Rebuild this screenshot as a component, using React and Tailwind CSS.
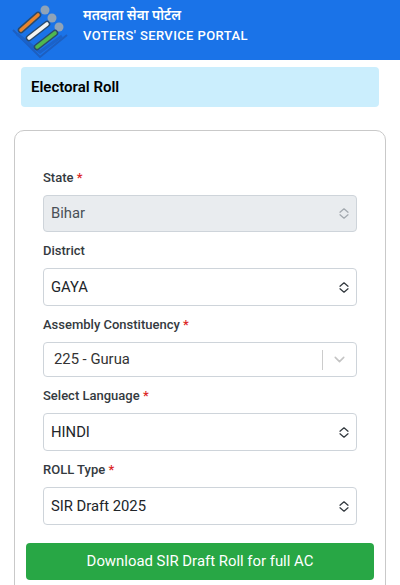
import { ChevronDown } from 'lucide-react'

function UpDown({ muted }) {
    return (
        <svg width="10" height="11" viewBox="0 0 10 11" fill="none" stroke={muted ? '#a3a9af' : '#343a40'} strokeWidth="1.3" strokeLinecap="round" strokeLinejoin="round">
            <path d="M1 4.2l4-3.4 4 3.4" />
            <path d="M1 6.8l4 3.4 4-3.4" />
        </svg>
    )
}

function Logo() {
    return (
        <svg width="83" height="60" viewBox="0 0 83 60" className="shrink-0">
            <path d="M13 30L40 57L67 35" fill="none" stroke="#1d5fc0" strokeWidth="2" />
            <path d="M17 34L40 52L62 36" fill="none" stroke="#1b62c9" strokeWidth="3" />
            <circle cx="45" cy="10" r="4.5" fill="#8fa3b8" />
            <circle cx="52" cy="18" r="4.5" fill="#8fa3b8" />
            <circle cx="59" cy="27" r="4.5" fill="#8fa3b8" />
            <path d="M21 30L38 15" stroke="#2b4a6b" strokeWidth="6.5" strokeLinecap="round" />
            <path d="M21 30L38 15" stroke="#e8842c" strokeWidth="3.6" strokeLinecap="round" />
            <path d="M29 38L47 24" stroke="#2b4a6b" strokeWidth="6.5" strokeLinecap="round" />
            <path d="M29 38L47 24" stroke="#f4f4f2" strokeWidth="3.6" strokeLinecap="round" />
            <path d="M37 47L55 33" stroke="#2b4a6b" strokeWidth="6.5" strokeLinecap="round" />
            <path d="M37 47L55 33" stroke="#4fb84f" strokeWidth="3.6" strokeLinecap="round" />
        </svg>
    )
}

function Field({ label, required, children }) {
    return (
        <div className="mb-[10px]">
            <div className="mb-2 h-[18px] text-[13px] leading-[18px] font-medium text-[#343a40]">
                {label}
                {required && <span className="text-[#dc2626]"> *</span>}
            </div>
            {children}
        </div>
    )
}

function SelectBox({ value, disabled }) {
    return (
        <div className={`flex items-center justify-between rounded border border-[#ced4da] pr-[7px] pl-[7px] text-[14.8px] ${disabled ? 'h-[37px] bg-[#e9ecef] text-[#495057]' : 'h-[38px] bg-white text-[#212529]'}`}>
            <span>{value}</span>
            <UpDown muted={disabled} />
        </div>
    )
}

export default function App() {
    return (
        <div className="h-[585px] overflow-hidden bg-white font-['Roboto',sans-serif]">
            <header className="flex h-[60px] bg-[#1a73e8] text-white">
                <Logo />
                <div className="pt-[8px]">
                    <div className="text-[13.7px] leading-[18px] font-semibold font-['Noto_Sans_Devanagari','Noto_Sans',sans-serif]">मतदाता सेवा पोर्टल</div>
                    <div className="text-[13px] leading-[20px] font-medium tracking-[0.4px]">VOTERS' SERVICE PORTAL</div>
                </div>
            </header>

            <div className="mx-[21px] mt-[7px] flex h-10 items-center rounded bg-[#cbeefd] px-[10px] text-[15px] font-semibold text-black">
                Electoral Roll
            </div>

            <div className="mx-[14px] mt-[23px] rounded-[10px] border border-[#c9c9c9] px-[11px] pt-[38px] pb-6">
                <div className="px-[17px]">
                    <Field label="State" required>
                        <SelectBox value="Bihar" disabled />
                    </Field>
                    <Field label="District">
                        <SelectBox value="GAYA" />
                    </Field>
                    <Field label="Assembly Constituency" required>
                        <div className="flex h-[35px] items-center rounded border border-[#ced4da] bg-white pl-[10px] text-[14.8px] text-[#333333]">
                            <span className="flex-1">225 - Gurua</span>
                            <span className="h-5 w-px bg-[#cccccc]" />
                            <ChevronDown className="mx-[8px] text-[#c4c4c4]" size={17} strokeWidth={2.2} />
                        </div>
                    </Field>
                    <Field label="Select Language" required>
                        <SelectBox value="HINDI" />
                    </Field>
                    <Field label="ROLL Type" required>
                        <SelectBox value="SIR Draft 2025" />
                    </Field>
                </div>
                <button className="mt-2 h-[37px] w-full rounded bg-[#28a745] text-[14.9px] text-white">
                    Download SIR Draft Roll for full AC
                </button>
            </div>
        </div>
    )
}
